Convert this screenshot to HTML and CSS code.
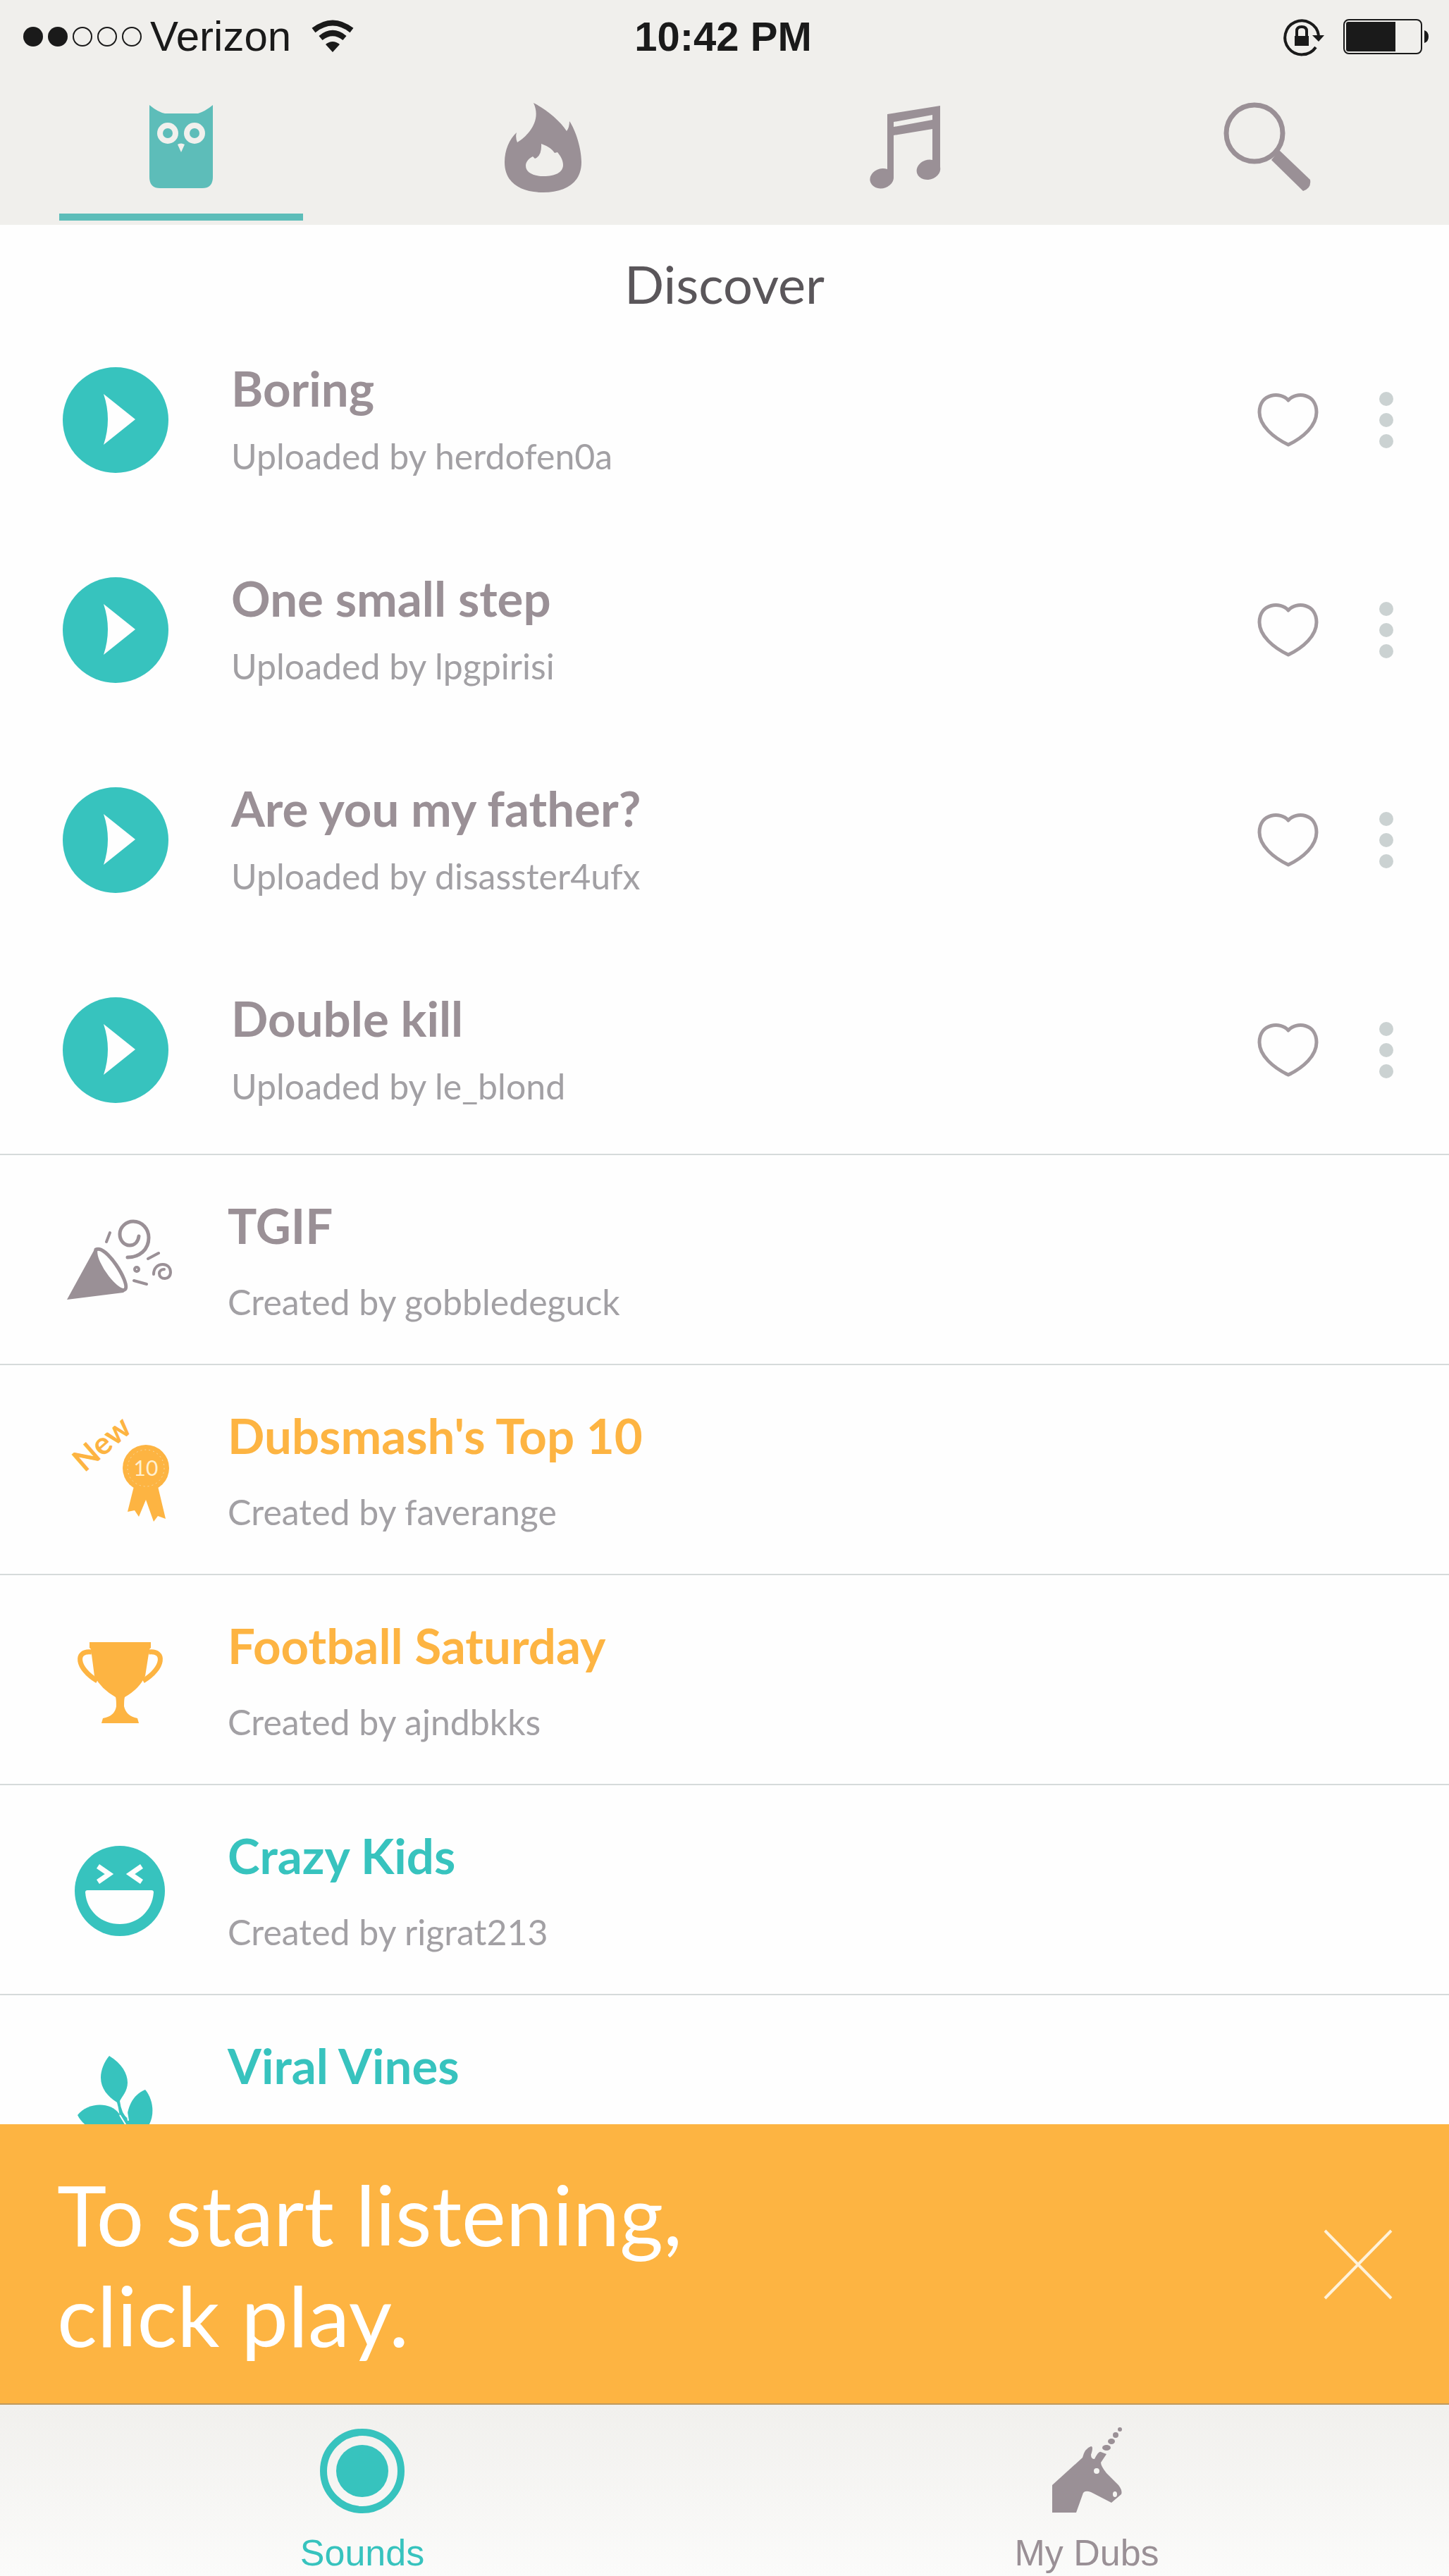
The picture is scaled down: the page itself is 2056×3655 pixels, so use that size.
FILE: index.html
```html
<!DOCTYPE html>
<html lang="en">
<head>
<meta charset="utf-8">
<meta name="viewport" content="width=device-width, initial-scale=1">
<title>Discover</title>
<link rel="stylesheet" href="styles.css">
</head>
<body>
<svg class="defs" aria-hidden="true">
  <symbol id="play" viewBox="0 0 150 150">
    <circle cx="75" cy="75" r="75" fill="#37c3be"/>
    <path d="M58 38L103 74L58 110Q70 74 58 38Z" fill="#fefefe"/>
  </symbol>
  <symbol id="heart" viewBox="0 0 90 80">
    <path d="M46 12C35 -1 5 2 5 29C5 48 25 65 46 75C67 65 86 48 86 29C86 2 57 -1 46 12Z" fill="none" stroke="#a29a9f" stroke-width="5" stroke-linejoin="round"/>
  </symbol>
  <symbol id="more" viewBox="0 0 20 80">
    <circle cx="10" cy="10" r="10"/><circle cx="10" cy="40" r="10"/><circle cx="10" cy="70" r="10"/>
  </symbol>
</svg>
<div class="app">
  <header class="header">
    <div class="status">
      <div class="status-left">
        <svg width="168" height="28" viewBox="0 0 168 28" role="img" aria-label="Signal">
          <g fill="#1a1a1a"><circle cx="14" cy="14" r="14"/><circle cx="49" cy="14" r="14"/></g>
          <g fill="none" stroke="#1a1a1a" stroke-width="2"><circle cx="84" cy="14" r="13"/><circle cx="119" cy="14" r="13"/><circle cx="154" cy="14" r="13"/></g>
        </svg>
        <span class="carrier">Verizon</span>
        <svg class="wifi" width="62" height="46" viewBox="0 0 62 46" role="img" aria-label="Wi-Fi">
          <path d="M31 45L21 34Q31 26 41 34Z" fill="#1a1a1a"/>
          <path d="M14 25Q31 11 48 25M4 14Q31 -7 58 14" fill="none" stroke="#1a1a1a" stroke-width="8"/>
        </svg>
      </div>
      <time class="clock">10:42 PM</time>
      <div class="status-right">
        <svg width="58" height="52" viewBox="0 0 58 52" role="img" aria-label="Rotation lock">
          <path d="M45 41A24 24 0 1 1 49 24" fill="none" stroke="#1a1a1a" stroke-width="4"/>
          <path d="M40 24H57L49 33Z" fill="#1a1a1a"/>
          <path d="M15 25H35V39H15Z" fill="#1a1a1a"/>
          <path d="M18 26V18Q18 12 25 12Q32 12 32 18V26" fill="none" stroke="#1a1a1a" stroke-width="4"/>
        </svg>
        <svg width="122" height="50" viewBox="0 0 122 50" role="img" aria-label="Battery">
          <rect x="1" y="1" width="110" height="48" rx="7" fill="none" stroke="#1a1a1a" stroke-width="2"/>
          <path d="M7 4H74V46H7Q4 46 4 43V7Q4 4 7 4ZM115 16Q121 18 121 25Q121 32 115 34Z" fill="#1a1a1a"/>
        </svg>
      </div>
    </div>
    <nav class="tabs" aria-label="Browse">
      <a class="tab active" href="#discover" aria-label="Discover">
        <svg width="130" height="134" viewBox="0 0 130 134">
          <path d="M20 6Q32 16 42 18H89Q99 15 110 6V108Q110 124 95 124H35Q20 124 20 108Z" fill="#5dbdb9"/>
          <g fill="#f1f0ed"><circle cx="46" cy="46" r="15"/><circle cx="84" cy="46" r="15"/><path d="M60 62Q65 59 70 62L65 73Z"/></g>
          <g fill="#5dbdb9"><circle cx="46" cy="46" r="7"/><circle cx="84" cy="46" r="7"/></g>
        </svg>
      </a>
      <a class="tab" href="#trending" aria-label="Trending">
        <svg width="130" height="134" viewBox="-5 0 130 134">
          <path fill-rule="evenodd" fill="#9a9096" d="M46 3C62 11 84 28 93 43Q97 38 97 29C106 42 114 68 114 87C114 116 92 130 60 130C27 130 5 116 5 87C5 70 12 54 22 45Q20 52 23 59C38 50 58 28 46 3ZM57 61Q58 78 48 82L45 79C39 82 35 87 35 92C35 102 46 107 61 107C76 107 88 102 88 91C88 84 84 78 80 73L76 74Q71 66 57 61Z"/>
        </svg>
      </a>
      <a class="tab" href="#music" aria-label="Music">
        <svg width="130" height="134" viewBox="-10 0 130 134">
          <path fill-rule="evenodd" fill="#9a9096" d="M29 19L104 7V94A17 14 -15 1 1 93 84V40L38 49V108A17 14 -15 1 1 29 97ZM38 30V37L93 27V20Z"/>
        </svg>
      </a>
      <a class="tab" href="#search" aria-label="Search">
        <svg width="130" height="134" viewBox="0 0 130 134">
          <circle cx="46" cy="46" r="40" fill="none" stroke="#9a9096" stroke-width="7"/>
          <path d="M70 84L81 70L125 112Q127 124 115 128Z" fill="#9a9096"/>
        </svg>
      </a>
    </nav>
  </header>

  <main class="content" id="discover">
    <h1 class="title">Discover</h1>
    <ul class="sounds">
      <li class="sound">
        <button class="icon-button play" type="button" aria-label="Play Boring"><svg width="150" height="150"><use href="#play"/></svg></button>
        <div class="sound-text"><h2 class="name">Boring</h2><p class="by">Uploaded by herdofen0a</p></div>
        <button class="icon-button" type="button" aria-label="Like Boring"><svg width="90" height="80"><use href="#heart"/></svg></button>
        <button class="icon-button more" type="button" aria-label="More for Boring"><svg width="20" height="80"><use href="#more"/></svg></button>
      </li>
      <li class="sound">
        <button class="icon-button play" type="button" aria-label="Play One small step"><svg width="150" height="150"><use href="#play"/></svg></button>
        <div class="sound-text"><h2 class="name">One small step</h2><p class="by">Uploaded by lpgpirisi</p></div>
        <button class="icon-button" type="button" aria-label="Like One small step"><svg width="90" height="80"><use href="#heart"/></svg></button>
        <button class="icon-button more" type="button" aria-label="More for One small step"><svg width="20" height="80"><use href="#more"/></svg></button>
      </li>
      <li class="sound">
        <button class="icon-button play" type="button" aria-label="Play Are you my father?"><svg width="150" height="150"><use href="#play"/></svg></button>
        <div class="sound-text"><h2 class="name">Are you my father?</h2><p class="by">Uploaded by disasster4ufx</p></div>
        <button class="icon-button" type="button" aria-label="Like Are you my father?"><svg width="90" height="80"><use href="#heart"/></svg></button>
        <button class="icon-button more" type="button" aria-label="More for Are you my father?"><svg width="20" height="80"><use href="#more"/></svg></button>
      </li>
      <li class="sound">
        <button class="icon-button play" type="button" aria-label="Play Double kill"><svg width="150" height="150"><use href="#play"/></svg></button>
        <div class="sound-text"><h2 class="name">Double kill</h2><p class="by">Uploaded by le_blond</p></div>
        <button class="icon-button" type="button" aria-label="Like Double kill"><svg width="90" height="80"><use href="#heart"/></svg></button>
        <button class="icon-button more" type="button" aria-label="More for Double kill"><svg width="20" height="80"><use href="#more"/></svg></button>
      </li>
    </ul>
    <ul class="boards">
      <li>
        <a class="board" href="#tgif">
          <svg width="160" height="160" viewBox="0 0 160 160">
            <path d="M5 137L45 64C48 92 66 117 88 124L85 127Z" fill="#9a9096"/>
            <g fill="none" stroke="#9a9096" stroke-width="5" stroke-linecap="round">
              <path d="M46 66C60 58 94 112 88 122C80 132 42 86 46 66Z"/>
              <path d="M107 47C106 55 101 60 94 60C86 60 80 53 80 44C80 34 89 26 99 26C112 26 121 37 121 49C121 66 108 77 91 77"/>
              <g stroke-width="4"><path d="M66 42L61 55M135 71L120 79M100 110L118 115"/><circle cx="104" cy="94" r="3"/>
              <path d="M128 101C128 92 134 87 141 87C148 87 152 92 152 98C152 104 148 107 144 107C139 107 136 104 136 100C136 96 139 94 143 94"/></g>
            </g>
          </svg>
          <div class="board-text"><h2 class="name">TGIF</h2><p class="by">Created by gobbledeguck</p></div>
        </a>
      </li>
      <li>
        <a class="board orange" href="#top-10">
          <svg width="160" height="160" viewBox="0 0 160 160">
            <text class="badge-new" transform="translate(30 85) rotate(-41)">New</text>
            <g fill="#fdb442"><circle cx="117" cy="78" r="33"/><path d="M100 104L91 140L101 138L107 147L117 123L128 154L134 146L145 150L134 104Z"/></g>
            <circle cx="117" cy="78" r="26" fill="none" stroke="#f9d9a0" stroke-dasharray="2 4"/>
            <text class="badge-ten" x="117" y="89" text-anchor="middle">10</text>
          </svg>
          <div class="board-text"><h2 class="name">Dubsmash's Top 10</h2><p class="by">Created by faverange</p></div>
        </a>
      </li>
      <li>
        <a class="board orange" href="#football">
          <svg width="160" height="160" viewBox="0 0 160 160">
            <path d="M37 27H124V35L122 37L116 75Q108 93 87 105Q86 108 86 118Q89 132 105 135L107 142H54L56 135Q73 132 75 118Q75 108 74 105Q53 93 44 75L39 37L37 35Z" fill="#fdb442"/>
            <path d="M40 41C16 38 18 64 48 82M121 41C145 38 143 64 113 82" fill="none" stroke="#fdb442" stroke-width="7"/>
          </svg>
          <div class="board-text"><h2 class="name">Football Saturday</h2><p class="by">Created by ajndbkks</p></div>
        </a>
      </li>
      <li>
        <a class="board teal" href="#crazy-kids">
          <svg width="160" height="160" viewBox="0 0 160 160">
            <circle cx="80" cy="82" r="64" fill="#37c3be"/>
            <path d="M49 47L65 58L49 69M111 47L95 58L111 69" fill="none" stroke="#fefefe" stroke-width="7"/>
            <path d="M34 81H125Q128 81 128 84C126 111 105 129 80 129C54 129 33 111 31 84Q31 81 34 81Z" fill="#fefefe"/>
          </svg>
          <div class="board-text"><h2 class="name">Crazy Kids</h2><p class="by">Created by rigrat213</p></div>
        </a>
      </li>
      <li>
        <a class="board teal" href="#viral-vines">
          <svg width="160" height="160" viewBox="0 0 160 160">
            <g fill="#37c3be">
              <path d="M65 18C83 29 91 43 91 56C91 68 83 76 80 82Q82 100 92 108V130H80Q82 105 76 84C63 76 53 64 53 49C53 38 58 26 65 18Z"/>
              <path d="M20 102C34 84 66 82 79 100L86 122C64 132 32 126 20 102Z"/>
              <path d="M116 66C128 80 130 104 120 118L90 120C88 96 96 74 116 66Z"/>
            </g>
            <path d="M80 102L91 120M89 92L92 110" stroke="#fefefe" stroke-width="2"/>
          </svg>
          <div class="board-text"><h2 class="name">Viral Vines</h2></div>
        </a>
      </li>
    </ul>
  </main>

  <aside class="banner">
    <p class="banner-text">To start listening,<br>click play.</p>
    <button class="icon-button" type="button" aria-label="Close">
      <svg width="98" height="100" viewBox="0 0 98 100"><path d="M2 2L96 98M96 2L2 98" stroke="#fff2d9" stroke-width="4"/></svg>
    </button>
  </aside>

  <nav class="bottom" aria-label="Main">
    <a class="bottom-item selected" href="#sounds">
      <svg width="120" height="130" viewBox="0 0 120 130"><circle cx="60" cy="66" r="55" fill="none" stroke="#37c3be" stroke-width="10"/><circle cx="60" cy="66" r="37" fill="#37c3be"/></svg>
      <span>Sounds</span>
    </a>
    <a class="bottom-item" href="#my-dubs">
      <svg width="120" height="130" viewBox="0 0 120 130">
        <g fill="#9a9096">
          <path fill-rule="evenodd" d="M11 86L54 47Q57 34 66 31Q70 31 66 43Q66 49 71 49Q77 37 80 39L88 42L80 54Q80 59 88 69L105 86Q111 94 109 99L95 111L66 96Q58 93 55 97L45 125H11ZM70 66A4 4 0 1 0 78 66A4 4 0 1 0 70 66ZM97 99A3 4 0 1 0 103 99A3 4 0 1 0 97 99Z"/>
          <ellipse cx="88" cy="33" rx="6" ry="4"/><ellipse cx="95" cy="24" rx="5" ry="4"/><ellipse cx="101" cy="15" rx="4" ry="4"/><circle cx="107" cy="7" r="3"/>
        </g>
      </svg>
      <span>My Dubs</span>
    </a>
  </nav>
</div>
</body>
</html>
```
FILE: styles.css
```css
* { box-sizing: border-box; margin: 0; padding: 0; }

body {
  background: #fefefe;
  color: #9a9096;
  font-family: Lato, "Liberation Sans", sans-serif;
}

a { color: inherit; text-decoration: none; }
ul { list-style: none; }
svg { display: block; flex: none; overflow: visible; }
.defs { position: absolute; width: 0; height: 0; }

.app {
  display: flex;
  flex-direction: column;
  height: 100vh;
  overflow: hidden;
}

/* status bar and top tabs */
.header { background: #f0efec; }

.status {
  display: grid;
  grid-template-columns: 1fr auto 1fr;
  align-items: center;
  height: 100px;
  padding: 0 28px 0 24px;
  color: #1a1a1a;
  font-family: "Liberation Sans", Arial, sans-serif;
  font-size: 60px;
  line-height: 104px;
}
.status-left { display: flex; align-items: center; gap: 12px; padding-left: 9px; }
.wifi { margin-left: 16px; }
.clock { font-weight: 700; font-size: 58px; }
.status-right { display: flex; align-items: center; justify-content: flex-end; gap: 26px; }

.tabs { display: grid; grid-template-columns: repeat(4, 1fr); }
.tab {
  display: flex;
  flex-direction: column;
  align-items: center;
  gap: 26px;
  padding: 43px 84px 6px;
}
.tab::after { content: ""; width: 100%; height: 10px; }
.tab.active::after { background: #5dbdb9; }

.content { flex: 1; min-height: 0; overflow: hidden; }

.title {
  color: #5a565a;
  font-size: 74px;
  font-weight: 400;
  line-height: 128px;
  padding-top: 20px;
  height: 128px;
  text-align: center;
}
.name { font-size: 69px; font-weight: 700; line-height: 80px; }
.by { color: #a2a0a4; font-size: 50px; line-height: 60px; }
.icon-button { background: none; border: 0; cursor: pointer; }

.sound {
  display: flex;
  align-items: center;
  height: 298px;
  padding: 0 79px 0 89px;
}
.sound-text { flex: 1; padding: 0 0 4px 89px; }
.sound .by { margin-top: 26px; }
.more { margin-left: 85px; fill: #cbd2d2; }

.boards { margin-top: -2px; }
.board {
  display: flex;
  align-items: center;
  height: 298px;
  border-top: 2px solid #d6dada;
  padding: 0 90px;
}
.board-text { min-height: 180px; padding: 2px 0 0 73px; }
.board .by { margin-top: 38px; }
.orange .name { color: #fdb442; }
.teal .name { color: #37c3be; }
.badge-new { fill: #fdb442; font-size: 44px; font-weight: 700; }
.badge-ten { fill: #fff0d0; font-size: 30px; }

/* hint */
.banner {
  display: flex;
  align-items: center;
  justify-content: space-between;
  padding: 56px 80px 54px 81px;
  background: #fdb442;
  border-bottom: 2px solid #c09a5c;
  color: #fff;
}
.banner-text { font-size: 119px; line-height: 143px; }

/* bottom navigation */
.bottom {
  display: grid;
  grid-template-columns: repeat(2, 1fr);
  background: linear-gradient(#f1f0ed, #fbfbfa);
}
.bottom-item {
  display: flex;
  flex-direction: column;
  align-items: center;
  gap: 22px;
  height: 243px;
  padding-top: 28px;
  font-family: "Liberation Sans", Arial, sans-serif;
  font-size: 52px;
  line-height: 60px;
}
.selected { color: #37c3be; }
```
